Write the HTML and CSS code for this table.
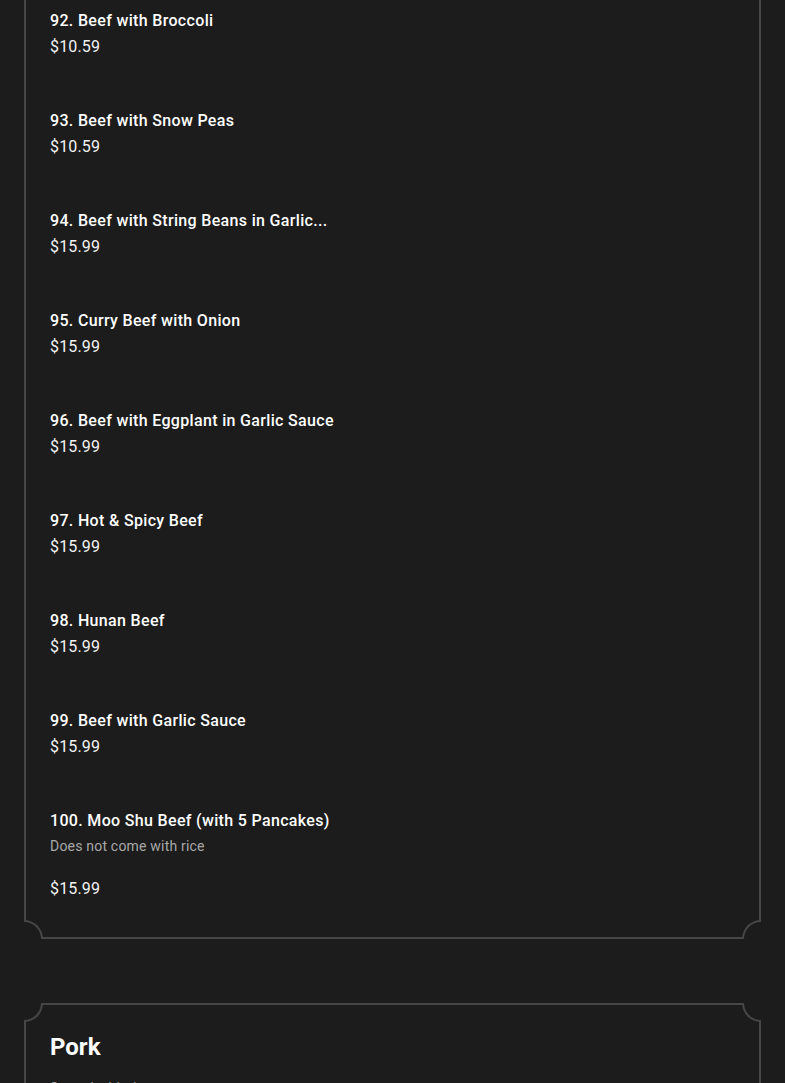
FILE: index.html
```html
<!DOCTYPE html>
<html lang="en">
<head>
<meta charset="utf-8">
<title>Menu</title>
<link rel="stylesheet" href="styles.css">
</head>
<body>
<main class="menu">
  <section class="card card-cut">
    <div class="item">
      <div class="item-title">92. Beef with Broccoli</div>
      <div class="item-price">$10.59</div>
    </div>
    <div class="item">
      <div class="item-title">93. Beef with Snow Peas</div>
      <div class="item-price">$10.59</div>
    </div>
    <div class="item">
      <div class="item-title">94. Beef with String Beans in Garlic...</div>
      <div class="item-price">$15.99</div>
    </div>
    <div class="item">
      <div class="item-title">95. Curry Beef with Onion</div>
      <div class="item-price">$15.99</div>
    </div>
    <div class="item">
      <div class="item-title">96. Beef with Eggplant in Garlic Sauce</div>
      <div class="item-price">$15.99</div>
    </div>
    <div class="item">
      <div class="item-title">97. Hot &amp; Spicy Beef</div>
      <div class="item-price">$15.99</div>
    </div>
    <div class="item">
      <div class="item-title">98. Hunan Beef</div>
      <div class="item-price">$15.99</div>
    </div>
    <div class="item">
      <div class="item-title">99. Beef with Garlic Sauce</div>
      <div class="item-price">$15.99</div>
    </div>
    <div class="item item-last">
      <div class="item-title">100. Moo Shu Beef (with 5 Pancakes)</div>
      <div class="item-desc">Does not come with rice</div>
      <div class="item-price">$15.99</div>
    </div>
    <span class="notch notch-bl"></span>
    <span class="notch notch-br"></span>
  </section>

  <section class="card">
    <span class="notch notch-tl"></span>
    <span class="notch notch-tr"></span>
    <h2 class="card-title">Pork</h2>
    <div class="card-note">Served with rice</div>
  </section>
</main>
</body>
</html>
```

FILE: styles.css
```css
html, body {
  margin: 0;
  padding: 0;
  background: #1c1c1c;
}

body {
  font-family: Roboto, "Liberation Sans", Arial, sans-serif;
  color: #ffffff;
}

.menu {
  display: flex;
  flex-direction: column;
  gap: 64px;
  padding: 0 24px;
}

.card {
  position: relative;
  border: 2px solid #464646;
  background: #1c1c1c;
  padding: 24px 24px 40px;
  box-sizing: border-box;
}

.card-cut {
  border-top: none;
  padding-top: 0;
  padding-bottom: 0;
}

.item {
  display: flex;
  flex-direction: column;
  padding: 9px 0 41px;
}

.item-last {
  padding-bottom: 36px;
}

.item-title {
  font-size: 16px;
  line-height: 24px;
  font-weight: 500;
  letter-spacing: 0.33px;
  color: #ffffff;
}

.item-price {
  margin-top: 2px;
  font-size: 16px;
  line-height: 24px;
  letter-spacing: 0.15px;
  color: #f2f2f2;
}

.item-desc {
  margin-top: 3px;
  margin-bottom: 19px;
  font-size: 14px;
  line-height: 20px;
  letter-spacing: 0.2px;
  color: #a8a8a8;
}

.card-title {
  margin: 1px 0 0;
  font-size: 24px;
  line-height: 34px;
  font-weight: 700;
}

.card-note {
  margin-top: 14px;
  font-size: 14px;
  line-height: 20px;
  letter-spacing: 0.2px;
  color: #a8a8a8;
}

.notch {
  position: absolute;
  width: 19px;
  height: 19px;
  box-sizing: border-box;
  background: #1c1c1c;
  border: 0 solid #464646;
}

.notch-bl {
  left: -2px;
  bottom: -2px;
  border-top-width: 2px;
  border-right-width: 2px;
  border-top-right-radius: 19px;
}

.notch-br {
  right: -2px;
  bottom: -2px;
  border-top-width: 2px;
  border-left-width: 2px;
  border-top-left-radius: 19px;
}

.notch-tl {
  left: -2px;
  top: -2px;
  border-bottom-width: 2px;
  border-right-width: 2px;
  border-bottom-right-radius: 19px;
}

.notch-tr {
  right: -2px;
  top: -2px;
  border-bottom-width: 2px;
  border-left-width: 2px;
  border-bottom-left-radius: 19px;
}
```
